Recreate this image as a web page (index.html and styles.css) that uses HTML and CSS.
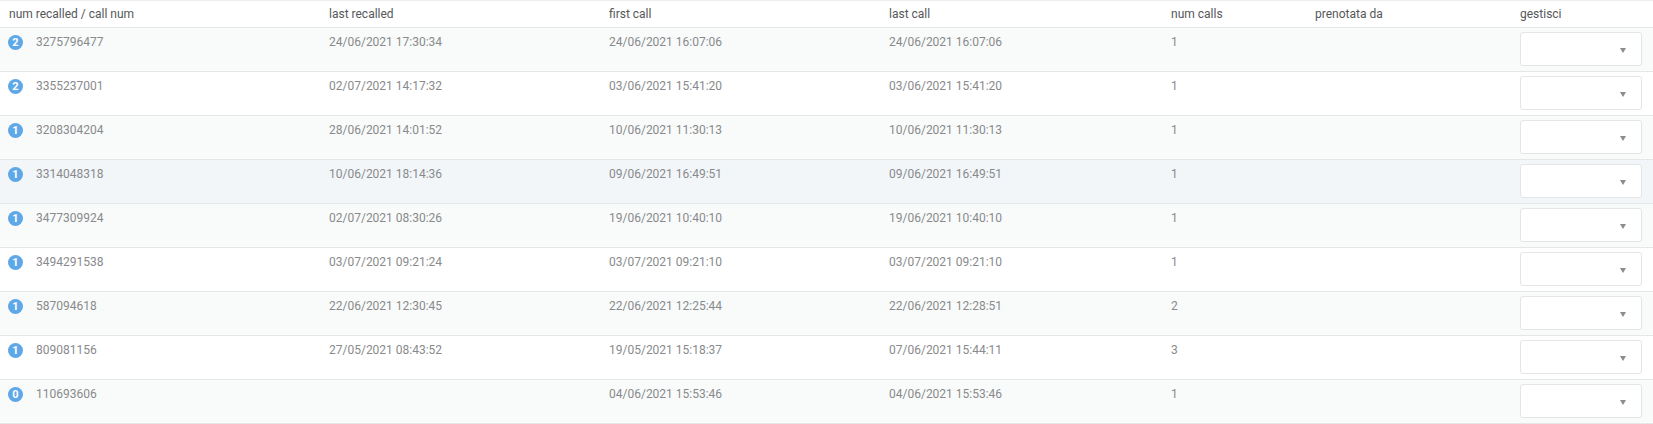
FILE: index.html
```html
<!DOCTYPE html>
<html>
<head>
<meta charset="utf-8">
<link rel="stylesheet" href="styles.css">
</head>
<body>
<div class="table">
  <div class="row head">
    <div class="cell">num recalled / call num</div>
    <div class="cell">last recalled</div>
    <div class="cell">first call</div>
    <div class="cell">last call</div>
    <div class="cell">num calls</div>
    <div class="cell">prenotata da</div>
    <div class="cell">gestisci</div>
  </div>
  <div class="row odd">
    <div class="cell"><span class="badge">2</span>3275796477</div>
    <div class="cell">24/06/2021 17:30:34</div>
    <div class="cell">24/06/2021 16:07:06</div>
    <div class="cell">24/06/2021 16:07:06</div>
    <div class="cell">1</div>
    <div class="cell"></div>
    <div class="cell"><div class="select"><span class="arrow"></span></div></div>
  </div>
  <div class="row">
    <div class="cell"><span class="badge">2</span>3355237001</div>
    <div class="cell">02/07/2021 14:17:32</div>
    <div class="cell">03/06/2021 15:41:20</div>
    <div class="cell">03/06/2021 15:41:20</div>
    <div class="cell">1</div>
    <div class="cell"></div>
    <div class="cell"><div class="select"><span class="arrow"></span></div></div>
  </div>
  <div class="row odd">
    <div class="cell"><span class="badge">1</span>3208304204</div>
    <div class="cell">28/06/2021 14:01:52</div>
    <div class="cell">10/06/2021 11:30:13</div>
    <div class="cell">10/06/2021 11:30:13</div>
    <div class="cell">1</div>
    <div class="cell"></div>
    <div class="cell"><div class="select"><span class="arrow"></span></div></div>
  </div>
  <div class="row hover">
    <div class="cell"><span class="badge">1</span>3314048318</div>
    <div class="cell">10/06/2021 18:14:36</div>
    <div class="cell">09/06/2021 16:49:51</div>
    <div class="cell">09/06/2021 16:49:51</div>
    <div class="cell">1</div>
    <div class="cell"></div>
    <div class="cell"><div class="select"><span class="arrow"></span></div></div>
  </div>
  <div class="row odd">
    <div class="cell"><span class="badge">1</span>3477309924</div>
    <div class="cell">02/07/2021 08:30:26</div>
    <div class="cell">19/06/2021 10:40:10</div>
    <div class="cell">19/06/2021 10:40:10</div>
    <div class="cell">1</div>
    <div class="cell"></div>
    <div class="cell"><div class="select"><span class="arrow"></span></div></div>
  </div>
  <div class="row">
    <div class="cell"><span class="badge">1</span>3494291538</div>
    <div class="cell">03/07/2021 09:21:24</div>
    <div class="cell">03/07/2021 09:21:10</div>
    <div class="cell">03/07/2021 09:21:10</div>
    <div class="cell">1</div>
    <div class="cell"></div>
    <div class="cell"><div class="select"><span class="arrow"></span></div></div>
  </div>
  <div class="row odd">
    <div class="cell"><span class="badge">1</span>587094618</div>
    <div class="cell">22/06/2021 12:30:45</div>
    <div class="cell">22/06/2021 12:25:44</div>
    <div class="cell">22/06/2021 12:28:51</div>
    <div class="cell">2</div>
    <div class="cell"></div>
    <div class="cell"><div class="select"><span class="arrow"></span></div></div>
  </div>
  <div class="row">
    <div class="cell"><span class="badge">1</span>809081156</div>
    <div class="cell">27/05/2021 08:43:52</div>
    <div class="cell">19/05/2021 15:18:37</div>
    <div class="cell">07/06/2021 15:44:11</div>
    <div class="cell">3</div>
    <div class="cell"></div>
    <div class="cell"><div class="select"><span class="arrow"></span></div></div>
  </div>
  <div class="row odd">
    <div class="cell"><span class="badge">0</span>110693606</div>
    <div class="cell"></div>
    <div class="cell">04/06/2021 15:53:46</div>
    <div class="cell">04/06/2021 15:53:46</div>
    <div class="cell">1</div>
    <div class="cell"></div>
    <div class="cell"><div class="select"><span class="arrow"></span></div></div>
  </div>
</div>
</body>
</html>
```

FILE: styles.css
```css
html, body {
  margin: 0;
  padding: 0;
  background: #ffffff;
}
body {
  font-family: Roboto, "Liberation Sans", sans-serif;
  font-size: 12px;
  color: #888a8c;
}
.table {
  width: 1653px;
  border-top: 1px solid #eceeef;
}
.row {
  display: grid;
  grid-template-columns: 320px 280px 280px 282px 144px 205px 142px;
  height: 43px;
  border-bottom: 1px solid #e4e7e9;
  background: #ffffff;
}
.row.odd {
  background: #f9fafa;
}
.row.hover {
  background: #f3f6f9;
}
.row.head {
  height: 26px;
  color: #555759;
  background: #ffffff;
}
.cell {
  padding: 6px 0 0 9px;
  line-height: 16px;
  white-space: nowrap;
  display: flex;
  align-items: flex-start;
}
.head .cell {
  padding-top: 5px;
}
.badge {
  width: 15px;
  height: 15px;
  border-radius: 50%;
  background: #5fa8e8;
  color: #ffffff;
  font-weight: bold;
  font-size: 11px;
  line-height: 15px;
  text-align: center;
  margin: 1px 13px 0 -1px;
  flex: none;
}
.select {
  box-sizing: border-box;
  width: 122px;
  height: 34px;
  margin-top: -2px;
  border: 1px solid #e3e5e7;
  border-radius: 3px;
  background: #ffffff;
  display: flex;
  align-items: center;
  justify-content: flex-end;
  padding-right: 15px;
}
.arrow {
  width: 0;
  height: 0;
  border-left: 3.5px solid transparent;
  border-right: 3.5px solid transparent;
  border-top: 5px solid #8a8c8e;
  margin-top: 2px;
}
```
